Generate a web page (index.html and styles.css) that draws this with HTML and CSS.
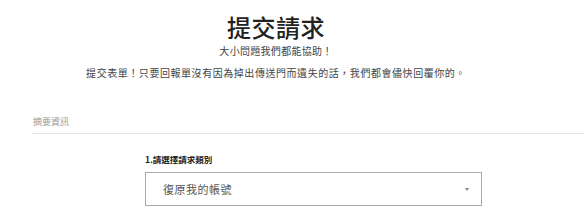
FILE: index.html
```html
<!DOCTYPE html>
<html lang="zh-Hant">
<head>
<meta charset="utf-8">
<link rel="stylesheet" href="styles.css">
</head>
<body>
<header class="hero">
  <h1 class="title">提交請求</h1>
  <p class="sub">大小問題我們都能協助！</p>
  <p class="desc">提交表單！只要回報單沒有因為掉出傳送門而遺失的話，我們都會儘快回覆你的。</p>
</header>
<section class="section">
  <div class="section-head">摘要資訊</div>
  <div class="form">
    <label class="field-label">1.請選擇請求類別</label>
    <div class="select">
      <span class="select-value">復原我的帳號</span>
      <span class="caret"></span>
    </div>
  </div>
</section>
</body>
</html>
```
FILE: styles.css
```css
html, body {
  margin: 0;
  padding: 0;
  background: #ffffff;
}
body {
  font-family: "Noto Sans CJK TC", "Noto Sans", sans-serif;
  color: #333;
  width: 584px;
  height: 221px;
  overflow: hidden;
}
.hero {
  text-align: center;
  padding-top: 12px;
  padding-right: 32px;
}
.title {
  margin: 0;
  font-size: 24px;
  line-height: 29px;
  font-weight: 500;
  color: #222;
  letter-spacing: 0.5px;
}
.sub, .desc {
  margin: 0;
  font-size: 10px;
  line-height: 20px;
  color: #444;
  letter-spacing: 0.3px;
}
.desc {
  margin-top: 1px;
  line-height: 21px;
  letter-spacing: 0.55px;
}
.section {
  margin-top: 33px;
  padding-left: 32px;
}
.section-head {
  font-size: 9px;
  line-height: 12px;
  color: #999;
  padding-left: 1px;
  padding-bottom: 5px;
  border-bottom: 1px solid #e4e4e4;
}
.form {
  margin-left: 113px;
  width: 337px;
  padding-top: 19px;
}
.field-label {
  display: block;
  font-size: 8.5px;
  line-height: 12px;
  font-weight: 700;
  color: #222;
}
.select {
  margin-top: 7px;
  height: 32px;
  border: 1px solid #aaa;
  display: flex;
  align-items: center;
  justify-content: space-between;
  padding: 0 12px 0 17px;
}
.select-value {
  font-size: 11px;
  color: #555;
  letter-spacing: 0.5px;
}
.caret {
  width: 0;
  height: 0;
  border-left: 2px solid transparent;
  border-right: 2px solid transparent;
  border-top: 3px solid #888;
}
```
